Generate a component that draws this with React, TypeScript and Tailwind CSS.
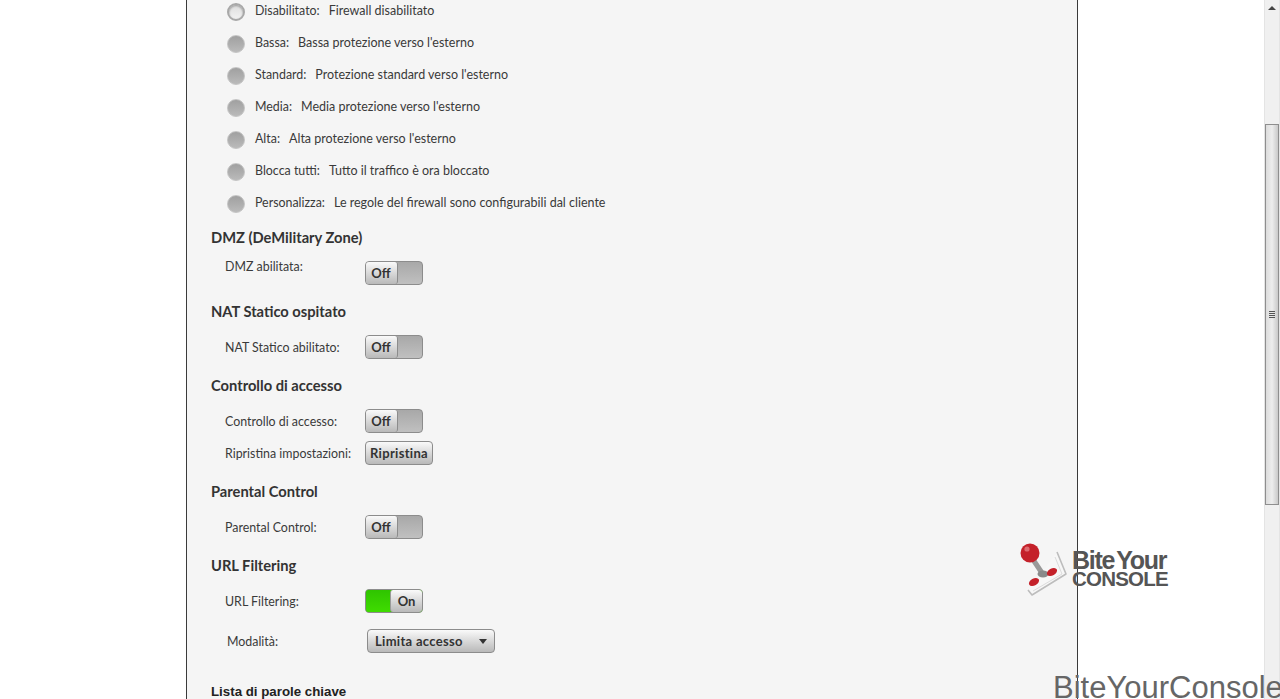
const font = "[font-family:Lato,'Liberation_Sans',sans-serif]";

const radios: [string, string][] = [
  ["Disabilitato:", "Firewall disabilitato"],
  ["Bassa:", "Bassa protezione verso l'esterno"],
  ["Standard:", "Protezione standard verso l'esterno"],
  ["Media:", "Media protezione verso l'esterno"],
  ["Alta:", "Alta protezione verso l'esterno"],
  ["Blocca tutti:", "Tutto il traffico è ora bloccato"],
  ["Personalizza:", "Le regole del firewall sono configurabili dal cliente"],
];

function Radio({ label, text, active }: { label: string; text: string; active?: boolean }) {
  return (
    <div className="h-8 flex items-center pl-[40px]">
      <div
        className={
          active
            ? "w-[18px] h-[18px] mt-px rounded-full border-2 border-[#a8a8a8] bg-gradient-to-b from-[#dedede] to-[#f2f2f2] shadow-[inset_0_1px_2px_#999]"
            : "w-[18px] h-[18px] mt-px rounded-full border border-[#c4c4c4] bg-gradient-to-b from-[#a0a0a0] to-[#bababa]"
        }
      />
      <span className="ml-[10px] text-[12.4px] text-[#3a3a3a]">{label}</span>
      <span className="ml-[9px] text-[12.5px] text-[#3a3a3a]">{text}</span>
    </div>
  );
}

function Heading({ children, className = "" }: { children: string; className?: string }) {
  return <h2 className={"pl-[24px] h-5 leading-5 text-[14.7px] font-bold text-[#333] " + className}>{children}</h2>;
}

function OffToggle() {
  return (
    <div className="w-[58px] h-6 rounded-[4px] border border-[#8c8c8c] flex overflow-hidden bg-gradient-to-b from-[#a8a8a8] to-[#c0c0c0]">
      <div className="w-[32px] h-full border-r border-[#8c8c8c] bg-gradient-to-b from-[#fafafa] to-[#b9b9b9] rounded-r-[3px] flex items-center justify-center text-[13px] font-bold text-[#333] pr-[1px] pt-px">
        Off
      </div>
    </div>
  );
}

function OnToggle() {
  return (
    <div className="w-[58px] h-6 rounded-[4px] border border-[#8c8c8c] flex overflow-hidden bg-[#3ccf00]">
      <div className="w-[24px] h-full bg-gradient-to-b from-[#2fc400] to-[#3fdc00]" />
      <div className="flex-1 h-full border-l border-[#9a9a9a] rounded-l-[3px] bg-gradient-to-b from-[#fafafa] to-[#b9b9b9] flex items-center justify-center text-[13px] font-bold text-[#333] pt-px">
        On
      </div>
    </div>
  );
}

function Row({ label, children, alignTop }: { label: string; children: React.ReactNode; alignTop?: boolean }) {
  return (
    <div className={"flex pl-[38px] h-6 " + (alignTop ? "items-start" : "items-center")}>
      <span className={"w-[140px] text-[12.4px] text-[#3a3a3a] pt-[2px] " + (alignTop ? "leading-[8px]" : "")}>{label}</span>
      {children}
    </div>
  );
}

function Logo() {
  return (
    <div className="absolute left-[1019px] top-[542px] flex items-center">
      <svg width="50" height="54" viewBox="0 0 50 54">
        <path d="M38 10 L47 32 L13 53 L9 48" fill="#f7f7f7" stroke="#bdbdbd" strokeWidth="1.6" strokeLinejoin="round" />
        <path d="M36 15 L43 32 L14 49" fill="none" stroke="#dcdcdc" strokeWidth="1" />
        <path d="M13 16 L23 31" stroke="#999" strokeWidth="5" />
        <ellipse cx="24" cy="32" rx="5.5" ry="3.5" fill="#8a8a8a" />
        <circle cx="11" cy="11" r="9.5" fill="#c4212a" />
        <circle cx="8" cy="7" r="2.6" fill="#de6a70" />
        <ellipse cx="33" cy="30" rx="5.5" ry="3.5" transform="rotate(-30 33 30)" fill="#c4212a" />
        <ellipse cx="15" cy="40" rx="5.5" ry="3.5" transform="rotate(-30 15 40)" fill="#c4212a" />
      </svg>
      <div className="ml-[3px] -mt-[1px] [font-family:'Liberation_Sans',sans-serif] font-bold text-[#555]">
        <div className="text-[25px] tracking-[-1.3px] [word-spacing:-3px] leading-[20px]">Bite Your</div>
        <div className="text-[20.5px] tracking-[-0.8px] leading-[17px]">CONSOLE</div>
      </div>
    </div>
  );
}

function Scrollbar() {
  return (
    <div className="w-4 h-full bg-[#f0f0f0] border-x border-[#e4e4e4] flex flex-col items-center relative shrink-0">
      <div className="mt-[6px] w-0 h-0 border-x-[4px] border-x-transparent border-b-[4px] border-b-[#444]" />
      <div className="absolute left-0 right-0 top-[124px] h-[381px] border border-[#8e8e8e] bg-gradient-to-r from-[#dcdcdc] via-[#ededed] to-[#c9c9c9] flex flex-col items-center justify-center gap-px">
        <div className="w-[6px] h-px bg-[#555]" />
        <div className="w-[6px] h-px bg-[#555]" />
        <div className="w-[6px] h-px bg-[#555]" />
        <div className="w-[6px] h-px bg-[#555]" />
      </div>
    </div>
  );
}

export default function App() {
  return (
    <div className={"relative w-[1280px] h-[699px] overflow-hidden bg-white flex " + font}>
      <div className="flex-1 h-full overflow-hidden pl-[186px]">
        <div className="w-[892px] h-full flow-root border-x border-[#3a3a3a] bg-[#f5f5f5]">
          <div className="-mt-[5px]">
            {radios.map(([l, t], i) => (
              <Radio key={l} label={l} text={t} active={i === 0} />
            ))}
          </div>
          <Heading className="mt-[8px]">DMZ (DeMilitary Zone)</Heading>
          <div className="mt-[14px]">
            <Row label="DMZ abilitata:" alignTop>
              <OffToggle />
            </Row>
          </div>
          <Heading className="mt-[16px]">NAT Statico ospitato</Heading>
          <div className="mt-[14px]">
            <Row label="NAT Statico abilitato:">
              <OffToggle />
            </Row>
          </div>
          <Heading className="mt-[16px]">Controllo di accesso</Heading>
          <div className="mt-[14px] flex flex-col gap-2">
            <Row label="Controllo di accesso:">
              <OffToggle />
            </Row>
            <Row label="Ripristina impostazioni:">
              <button className="w-[68px] h-6 rounded-[4px] border border-[#8c8c8c] bg-gradient-to-b from-[#fafafa] to-[#b9b9b9] text-[13px] font-bold text-[#333] tracking-[0.3px] whitespace-nowrap pt-px">
                Ripristina
              </button>
            </Row>
          </div>
          <Heading className="mt-[16px]">Parental Control</Heading>
          <div className="mt-[14px]">
            <Row label="Parental Control:">
              <OffToggle />
            </Row>
          </div>
          <Heading className="mt-[16px]">URL Filtering</Heading>
          <div className="mt-[14px]">
            <Row label="URL Filtering:">
              <OnToggle />
            </Row>
          </div>
          <div className="mt-4 flex items-center h-6 pl-[40px]">
            <span className="w-[140px] text-[12.4px] text-[#3a3a3a] pt-[2px]">Modalità:</span>
            <div className="w-[128px] h-6 rounded-[4px] border border-[#8c8c8c] bg-gradient-to-b from-[#fafafa] to-[#b9b9b9] flex items-center justify-between pl-[7px] pr-[7px] pt-px text-[13px] font-bold text-[#333] tracking-[0.3px]">
              <span>Limita accesso</span>
              <span className="w-0 h-0 border-x-[4px] border-x-transparent border-t-[5px] border-t-[#333]" />
            </div>
          </div>
          <h3 className="mt-[29px] pl-[24px] h-5 leading-5 text-[13.3px] font-bold text-[#222] [font-family:'Liberation_Sans',sans-serif]">
            Lista di parole chiave
          </h3>
        </div>
      </div>
      <Scrollbar />
      <Logo />
      <div className="absolute left-[1053px] top-[669px] text-[31px] leading-[38px] text-[#666] whitespace-nowrap [font-family:'Liberation_Sans',sans-serif]">
        BiteYourConsole
      </div>
    </div>
  );
}
